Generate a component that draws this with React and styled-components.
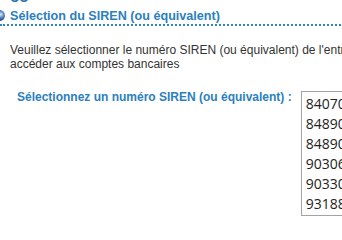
import React from "react";
import styled, { createGlobalStyle } from "styled-components";

const GlobalStyle = createGlobalStyle`
  html, body {
    margin: 0;
    padding: 0;
    background: #ffffff;
    overflow: hidden;
  }
  body {
    font-family: "Liberation Sans", Arial, sans-serif;
    color: #333333;
  }
`;

const Page = styled.div`
  width: 420px;
`;

const PrevTitle = styled.div`
  margin-top: -9px;
  padding-left: 10px;
  font-size: 12px;
  line-height: 14px;
  font-weight: bold;
  color: #2b73ad;
`;

const SectionTitle = styled.h2`
  margin: 3px 0 0;
  font-size: 12.6px;
  line-height: 16px;
  font-weight: bold;
  color: #2b80bd;
  border-bottom: 2px dotted #2b86c2;

  &::before {
    content: "";
    display: inline-block;
    width: 11px;
    height: 11px;
    margin: 0 5px 0 -6px;
    vertical-align: -1px;
    border-radius: 50%;
    background: radial-gradient(
      circle at 62% 40%,
      #e3eef8 0,
      #8fb3dc 18%,
      #3466a8 48%,
      #14397a 75%,
      #0b2659 100%
    );
  }
`;

const Intro = styled.p`
  margin: 17px 0 0;
  padding-left: 10px;
  font-size: 12px;
  line-height: 14px;
  color: #333333;
`;

const FormRow = styled.div`
  display: flex;
  align-items: flex-start;
  gap: 9px;
  margin-top: 20px;
  padding-left: 17px;
`;

const Label = styled.label`
  font-size: 12px;
  line-height: 14px;
  font-weight: bold;
  color: #2b80bd;
  white-space: nowrap;
  margin-top: -1px;
`;

const ListBox = styled.div`
  width: 110px;
  border: 1px solid #a3a3a3;
  padding: 2px 0 1px;
  background: #ffffff;
`;

const Option = styled.div`
  height: 20px;
  line-height: 20px;
  padding-left: 4px;
  font-family: "Open Sans", "Noto Sans", sans-serif;
  font-size: 14px;
  color: #222222;
  white-space: nowrap;
`;

const sirens = [
  "840703721",
  "848904512",
  "848906037",
  "903061284",
  "903304750",
  "931884069",
];

export default function App() {
  return (
    <Page>
      <GlobalStyle />
      <PrevTitle>OO</PrevTitle>
      <SectionTitle>Sélection du SIREN (ou équivalent)</SectionTitle>
      <Intro>
        Veuillez sélectionner le numéro SIREN (ou équivalent) de l'entreprise
        pour accéder aux comptes bancaires
      </Intro>
      <FormRow>
        <Label>Sélectionnez un numéro SIREN (ou équivalent) :</Label>
        <ListBox role="listbox">
          {sirens.map((s) => (
            <Option role="option" key={s}>
              {s}
            </Option>
          ))}
        </ListBox>
      </FormRow>
    </Page>
  );
}
